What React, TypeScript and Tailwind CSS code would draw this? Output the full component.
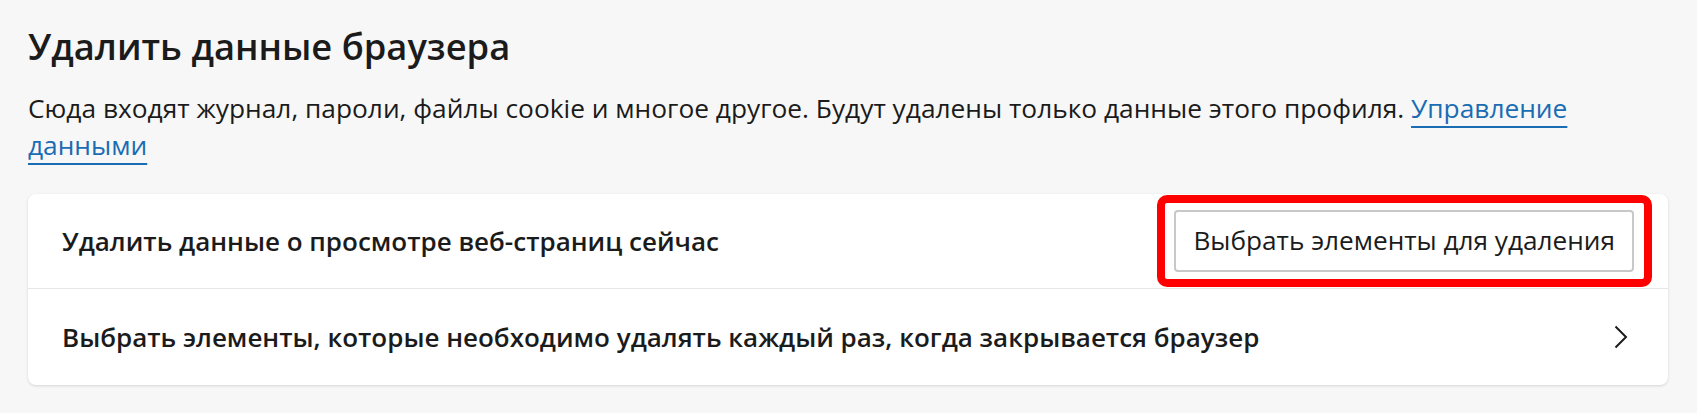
export default function App() {
  return (
    <div className="w-[1697px] h-[413px] bg-[#f7f7f7] pl-[28px] pr-[29px] pt-[22px] font-['Open_Sans',sans-serif] text-[#1b1b1b]">
      <h1 className="text-[36.3px] leading-[48px] font-semibold">Удалить данные браузера</h1>

      <p className="mt-[20px] text-[26.3px] leading-[37px] pr-[40px]">
        Сюда входят журнал, пароли, файлы cookie и многое другое. Будут удалены только данные этого профиля.{" "}
        <a href="#" className="text-[#1a6cb3] underline decoration-2 underline-offset-[8px]">
          Управление данными
        </a>
      </p>

      <div className="mt-[30px] bg-white rounded-[8px] shadow-[0_1px_3px_rgba(0,0,0,0.14)]">
        <div className="flex items-center justify-between h-[95px] pl-[34px] pr-[34px] border-b border-[#e6e6e6]">
          <span className="text-[26px] font-semibold">Удалить данные о просмотре веб-страниц сейчас</span>
          <div className="relative">
            <button className="h-[62px] px-[17px] bg-white border-2 border-[#c8c8c8] rounded-[4px] text-[26.2px]">
              Выбрать элементы для удаления
            </button>
            <span className="absolute -left-[17px] -right-[18px] -top-[15px] -bottom-[15px] border-[8px] border-[#ff0000] rounded-[10px] pointer-events-none" />
          </div>
        </div>
        <div className="flex items-center justify-between h-[96px] pl-[34px] pr-[40px]">
          <span className="text-[26px] font-semibold">
            Выбрать элементы, которые необходимо удалять каждый раз, когда закрывается браузер
          </span>
          <svg width="14" height="24" viewBox="0 0 14 24" fill="none" stroke="#1b1b1b" strokeWidth="2">
            <path d="M1.5 1.5 L12 12 L1.5 22.5" />
          </svg>
        </div>
      </div>
    </div>
  );
}
